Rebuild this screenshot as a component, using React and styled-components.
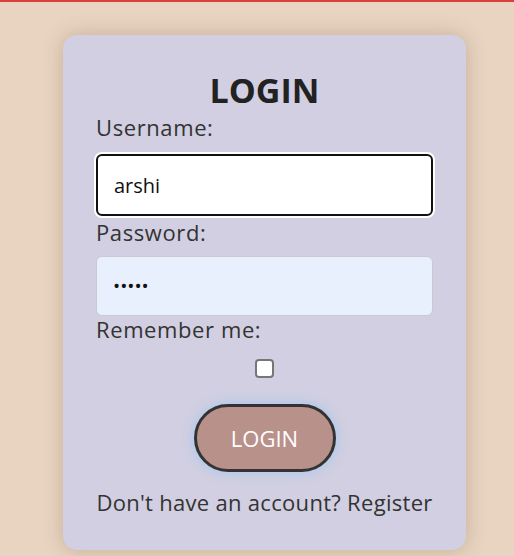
import React, { useState } from "react";
import styled, { createGlobalStyle } from "styled-components";

//  //  //  STYLED-COMPONENTS   //  //  //

const GlobalStyle = createGlobalStyle`
	html, body {
		margin: 0;
		padding: 0;
		background: #e8d4c1;
		font-family: "Open Sans", "Noto Sans", sans-serif;
	}
`;

const TopBar = styled.div`
	height: 2px;
	background: #d8413a;
`;

const Page = styled.main`
	display: flex;
	justify-content: center;
	padding: 33px 0 0 15px;
	min-height: 554px;
	box-sizing: border-box;
`;

const Card = styled.form`
	box-sizing: border-box;
	width: 403px;
	height: 515px;
	padding: 38px 33px 0;

	display: flex;
	flex-direction: column;

	background: #d1cfe1;
	border-radius: 14px;
	box-shadow: 0 0 20px rgba(120, 90, 60, 0.3);
`;

const Title = styled.h1`
	margin: 0;
	text-align: center;
	font-size: 34px;
	font-weight: 700;
	line-height: 34px;
	color: #222;
`;

const Label = styled.label`
	margin-top: ${(p) => p.$gap || 0}px;
	font-size: 22px;
	line-height: 26px;
	letter-spacing: 0.6px;
	color: #333;
`;

const Input = styled.input`
	box-sizing: border-box;
	width: 100%;
	height: ${(p) => (p.$focused ? "62px" : "60px")};
	margin-top: ${(p) => (p.$focused ? "14px" : "11px")};
	padding: 0 16px;

	font-family: inherit;
	font-size: 20px;
	color: #111;

	background: ${(p) => (p.$focused ? "#ffffff" : "#e8f0fe")};
	border: ${(p) => (p.$focused ? "2px solid #111" : "1px solid #c9c9cf")};
	border-radius: 6px;
	box-shadow: ${(p) => (p.$focused ? "0 0 0 2px #ffffff" : "none")};
	outline: none;

	&[type="password"] {
		font-size: 19px;
	}
`;

const CheckRow = styled.div`
	display: flex;
	justify-content: center;
	padding: 17px 0 26px;
`;

const Check = styled.input`
	appearance: none;
	margin: 0;
	width: 19px;
	height: 19px;
	background: #fff;
	border: 2px solid #767676;
	border-radius: 4px;
	box-sizing: border-box;
`;

const ButtonRow = styled.div`
	display: flex;
	justify-content: center;
`;

const Button = styled.button`
	width: 142px;
	height: 68px;
	box-sizing: border-box;

	font-family: inherit;
	font-size: 22px;
	color: #fff;

	background: #b9918b;
	border: 3px solid #333;
	border-radius: 34px;
	box-shadow: 0 0 10px 2px rgba(160, 200, 240, 0.7);
	cursor: pointer;
`;

const Footer = styled.p`
	margin: 17px 0 0;
	font-size: 22px;
	line-height: 26px;
	letter-spacing: 0.3px;
	color: #333;
	text-align: center;
`;

//  //  //  FUNCTION    //  //  //

export default function App() {
	const [username, setUsername] = useState("arshi");
	const [password, setPassword] = useState("12345");

	return (
		<>
			<GlobalStyle />
			<TopBar />
			<Page>
				<Card onSubmit={(e) => e.preventDefault()}>
					<Title>LOGIN</Title>
					<Label htmlFor="username" $gap={7}>Username:</Label>
					<Input
						id="username"
						$focused
						value={username}
						onChange={(e) => setUsername(e.target.value)}
					/>
					<Label htmlFor="password" $gap={3}>Password:</Label>
					<Input
						id="password"
						type="password"
						value={password}
						onChange={(e) => setPassword(e.target.value)}
					/>
					<Label htmlFor="remember">Remember me:</Label>
					<CheckRow>
						<Check id="remember" type="checkbox" />
					</CheckRow>
					<ButtonRow>
						<Button type="submit">LOGIN</Button>
					</ButtonRow>
					<Footer>Don't have an account? Register</Footer>
				</Card>
			</Page>
		</>
	);
}
